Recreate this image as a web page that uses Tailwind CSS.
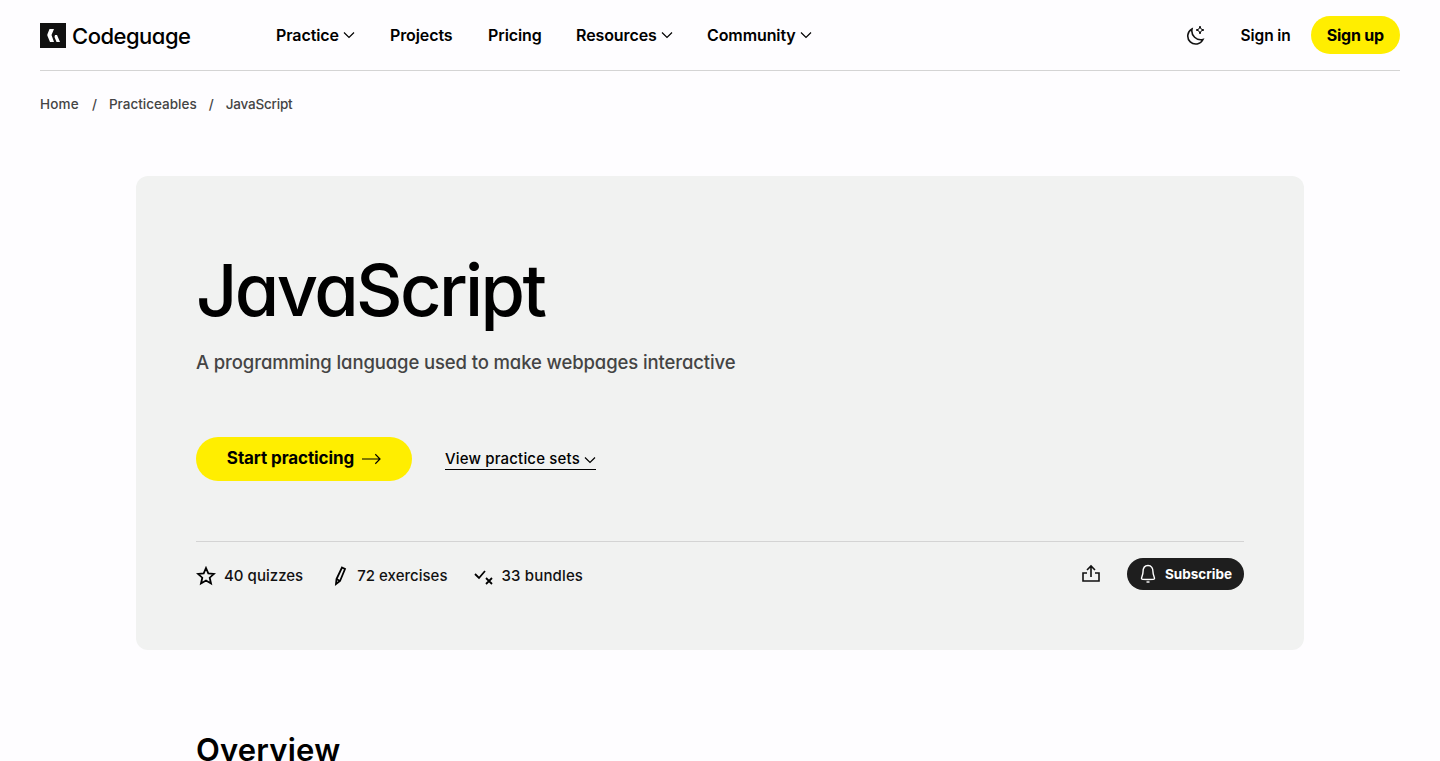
<!DOCTYPE html>
<html lang="en">
<head>
<meta charset="utf-8">
<title>JavaScript</title>
<script src="https://cdn.jsdelivr.net/npm/@tailwindcss/browser@4"></script>
</head>
<body class="bg-[#fefdff] text-black font-['Inter',sans-serif] h-[761px] overflow-hidden">
<header class="mx-10 h-[71px] border-b border-[#d4d4d4] flex items-center">
  <a class="flex items-center gap-[6px] w-[236px]">
    <svg class="w-[26px] h-[25px]" viewBox="0 0 26 25"><rect width="26" height="25" fill="#111"/><path d="M9.5 6H14L11.5 12 14 19H10L7.5 13Q7 12 7.5 11ZM15 12H17L20 19H16.5L14.5 14Z" fill="#fff"/></svg>
    <span class="text-[22px] font-medium tracking-[-0.5px] [font-feature-settings:'cv11'] translate-y-[1px]">Codeguage</span>
  </a>
  <nav class="flex items-center text-[16px] font-semibold tracking-[-0.1px] leading-none">
    <a class="flex items-center gap-1 w-[114px]">Practice <svg class="w-3 h-2" viewBox="0 0 12 8" fill="none" stroke="#000" stroke-width="1.2"><path d="M1 1.5 6 6.5 11 1.5"/></svg></a>
    <a class="w-[98px]">Projects</a>
    <a class="w-[88px]">Pricing</a>
    <a class="flex items-center gap-1 w-[131px]">Resources <svg class="w-3 h-2" viewBox="0 0 12 8" fill="none" stroke="#000" stroke-width="1.2"><path d="M1 1.5 6 6.5 11 1.5"/></svg></a>
    <a class="flex items-center gap-1">Community <svg class="w-3 h-2" viewBox="0 0 12 8" fill="none" stroke="#000" stroke-width="1.2"><path d="M1 1.5 6 6.5 11 1.5"/></svg></a>
  </nav>
  <div class="ml-auto flex items-center">
    <svg class="w-5 h-5 mr-[36px]" viewBox="0 0 20 20" fill="none" stroke="#111" stroke-width="1.6"><path d="M7 4A8 8 0 1 0 18 14.5 9 9 0 0 1 7 4Z"/><path d="M15 1 16 4 19 5 16 6 15 9 14 6 11 5 14 4Z" stroke-width="1"/></svg>
    <a class="text-[15.5px] font-semibold tracking-[-0.1px] mr-5 translate-y-[1px]">Sign in</a>
    <a class="h-[38px] px-4 rounded-full bg-[#ffee00] text-[16px] font-bold tracking-[-0.2px] flex items-center">Sign up</a>
  </div>
</header>
<div class="mx-10 mt-[25px] flex text-[13.5px] font-medium text-[#444] leading-4">
  <span class="tracking-[0.2px]">Home</span><span class="ml-[13px] mr-3">/</span><span>Practiceables</span><span class="mx-3">/</span><span class="tracking-[-0.2px]">JavaScript</span>
</div>
<main class="mt-[64px] mx-[136px] h-[474px] bg-[#f1f2f1] rounded-xl px-[60px] pt-[70px]">
  <h1 class="text-[72px] leading-[88px] font-medium tracking-[-2.6px] [font-feature-settings:'cv11']">JavaScript</h1>
  <p class="mt-[14px] text-[18.5px] leading-7 font-medium tracking-[-0.12px] text-[#444] [font-feature-settings:'cv11']">A programming language used to make webpages interactive</p>
  <div class="mt-[61px] flex items-center">
    <a class="h-[44px] w-[216px] rounded-full bg-[#ffee00] flex items-center justify-center gap-2 text-[17px] font-bold tracking-[-0.1px]">Start practicing
      <svg class="w-[19px] h-3" viewBox="0 0 20 12" fill="none" stroke="#000" stroke-width="1.2"><path d="M0 6H19M14 1 19 6 14 11"/></svg></a>
    <a class="ml-[33px] flex items-center gap-1 border-b border-black text-[15px] font-medium leading-5 tracking-[0.17px]">View practice sets <svg class="w-3 h-2 mt-[2px]" viewBox="0 0 12 8" fill="none" stroke="#000" stroke-width="1.2"><path d="M1 1.5 6 6.5 11 1.5"/></svg></a>
  </div>
  <div class="mt-[60px] border-t border-[#d4d4d4] pt-4 flex items-center">
    <div class="flex items-center pt-1 text-[15px] font-medium tracking-[0.02px] text-[#111]">
      <svg class="w-5 h-5 mr-2" viewBox="0 0 20 20" fill="none" stroke="#000" stroke-width="1.8"><path d="M10 2 12.3 7.4 18 7.9 13.7 11.7 15 17.5 10 14.5 5 17.5 6.3 11.7 2 7.9 7.7 7.4Z"/></svg>
      <span class="mr-[27px]">40 quizzes</span>
      <svg class="w-5 h-5 mr-[7px]" viewBox="0 0 20 20" fill="none" stroke="#000" stroke-width="1.8"><path d="M12 1.5 15 3 10 15 6 18 6.5 13Z"/><path d="M6.5 13 10 15" /></svg>
      <span class="mr-[26px]">72 exercises</span>
      <svg class="w-5 h-5 mr-[8px]" viewBox="0 0 20 20" fill="none" stroke="#000" stroke-width="1.8"><path d="M1 8 5 12 11 5M12 12 18 18M18 12 12 18"/></svg>
      <span class="tracking-[0.15px]">33 bundles</span>
    </div>
    <div class="ml-auto flex items-center">
      <svg class="w-5 h-5 mr-[26px]" viewBox="0 0 20 20" fill="none" stroke="#111" stroke-width="1.6"><path d="M10 2V13M6 6 10 2 14 6M6 9H2V17H18V9H14"/></svg>
      <a class="h-8 w-[117px] rounded-full bg-[#1e1e1e] text-white text-[13.5px] font-bold flex items-center justify-center gap-2"><svg class="w-[18px] h-5" viewBox="0 0 18 20" fill="none" stroke="#fff" stroke-width="1.4"><path d="M9 1.5C5.5 1.5 4 4.5 4 8 4 11 2.5 13 2.5 14.5 2.5 15.5 3.5 15.5 9 15.5 14.5 15.5 15.5 15.5 15.5 14.5 15.5 13 14 11 14 8 14 4.5 12.5 1.5 9 1.5Z"/><path d="M7.5 18H10.5"/></svg>Subscribe</a>
    </div>
  </div>
</main>
<h2 class="mt-[80px] mx-[196px] text-[31px] leading-10 font-semibold tracking-[0.2px] [font-feature-settings:'cv11']">Overview</h2>
</body>
</html>
